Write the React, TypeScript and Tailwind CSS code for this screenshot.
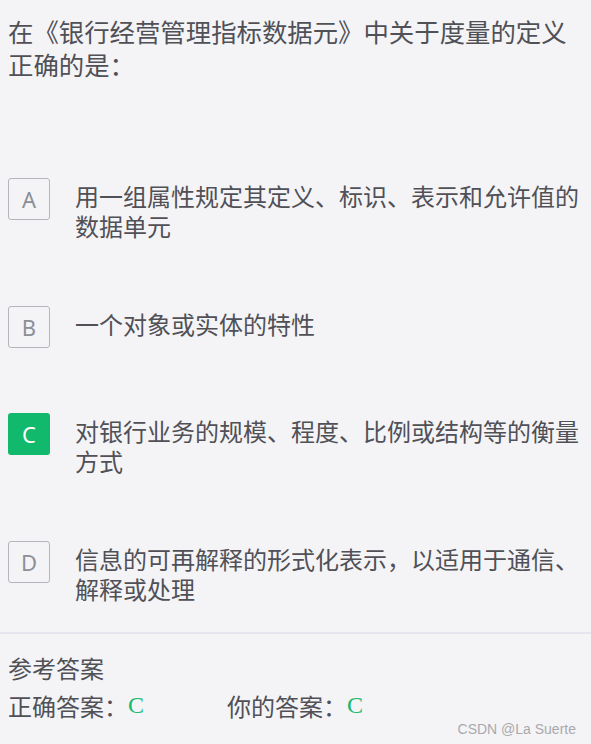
import React from "react";

type Option = {
  key: string;
  text: string;
  correct?: boolean;
};

const options: Option[] = [
  { key: "A", text: "用一组属性规定其定义、标识、表示和允许值的数据单元" },
  { key: "B", text: "一个对象或实体的特性" },
  { key: "C", text: "对银行业务的规模、程度、比例或结构等的衡量方式", correct: true },
  { key: "D", text: "信息的可再解释的形式化表示，以适用于通信、解释或处理" },
];

const cjk = { fontFamily: '"Microsoft YaHei", "Noto Sans CJK SC", sans-serif' };

const App: React.FC = () => {
  return (
    <div className="relative min-h-[744px] bg-[#f4f4f6] text-[#505057]" style={cjk}>
      <div className="px-2 pt-[15px]">
        <h1 className="text-[25.4px] leading-[33px] font-normal">
          在《银行经营管理指标数据元》中关于度量的定义正确的是：
        </h1>

        <div className="mt-[97px] flex flex-col gap-[65px]">
          {options.map((opt) => (
            <div key={opt.key} className="flex items-start gap-[25px]">
              <div
                className={
                  opt.correct
                    ? "flex h-[42px] w-[42px] shrink-0 items-center justify-center rounded-[3px] bg-[#10b96c] text-[22px] text-white"
                    : "flex h-[42px] w-[42px] shrink-0 items-center justify-center rounded-[3px] border border-[#b4b5bd] text-[22px] text-[#8c8f98]"
                }
                style={{ fontFamily: '"Noto Sans", sans-serif' }}
              >
                {opt.key}
              </div>
              <p className="mt-[3px] text-[24px] leading-[30px]">{opt.text}</p>
            </div>
          ))}
        </div>
      </div>

      <div className="mt-[28px] h-[2px] bg-[#e6e6ee]" />

      <div className="px-2 pt-[15px] text-[24px] leading-[38px]">
        <div>参考答案</div>
        <div className="flex">
          <div className="w-[219px]">
            正确答案：
            <span
              className="relative -top-[3px] text-[#19b970]"
              style={{ fontFamily: '"Liberation Serif", serif' }}
            >
              C
            </span>
          </div>
          <div>
            你的答案：
            <span
              className="relative -top-[3px] text-[#19b970]"
              style={{ fontFamily: '"Liberation Serif", serif' }}
            >
              C
            </span>
          </div>
        </div>
      </div>

      <div
        className="absolute bottom-[8px] right-[15px] text-[14px] leading-none text-[#a9a9ad]"
        style={{ fontFamily: '"Liberation Sans", Arial, sans-serif' }}
      >
        CSDN @La Suerte
      </div>
    </div>
  );
};

export default App;
